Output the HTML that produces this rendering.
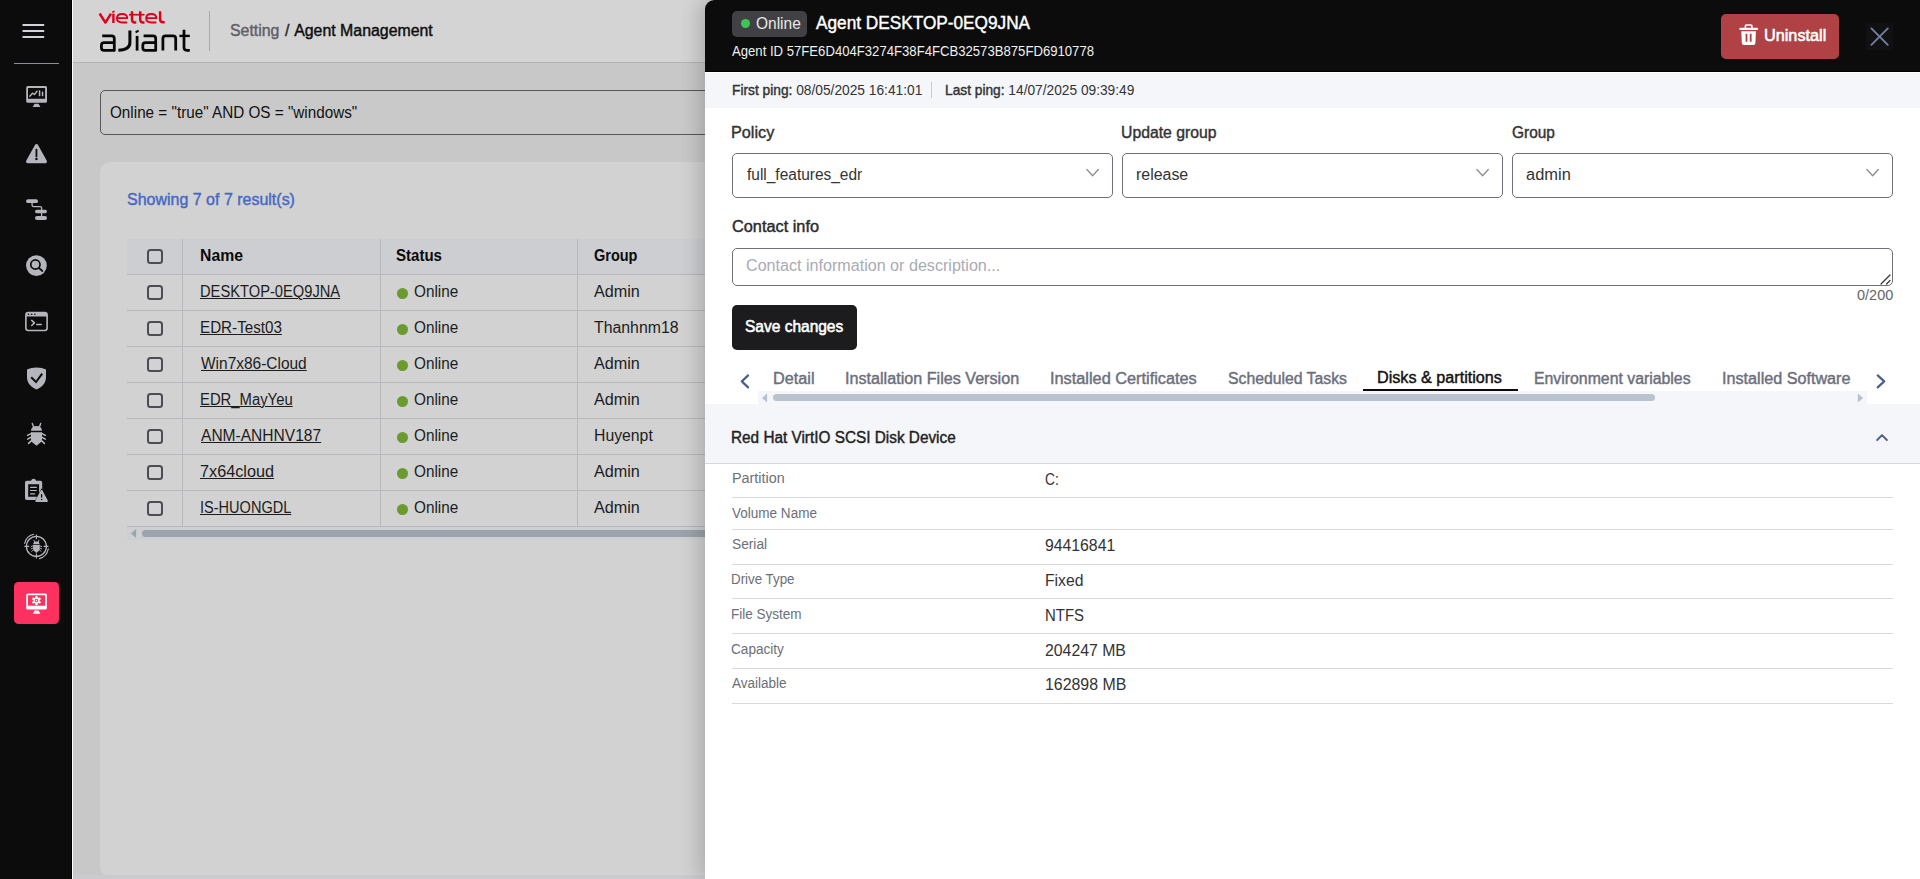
<!DOCTYPE html>
<html><head><meta charset="utf-8"><title>Agent Management</title>
<style>
*{box-sizing:border-box;margin:0;padding:0}
html,body{width:1920px;height:879px;overflow:hidden;background:#c8c8c8;font-family:"Liberation Sans",sans-serif}
.abs{position:absolute}
.t{position:absolute;white-space:nowrap;line-height:1;transform-origin:0 50%}
.m{-webkit-text-stroke:0.42px currentColor}
.m2{-webkit-text-stroke:0.55px currentColor}
.b{font-weight:bold}
.u{text-decoration:underline;text-decoration-thickness:1px;text-underline-offset:1px}
#side{left:0;top:0;width:71px;height:879px;background:#0c0c0c}
#sideb{left:71px;top:0;width:1px;height:879px;background:#000}
#sidew{left:72px;top:0;width:1px;height:879px;background:#fdfdfd}
#hdr{left:73px;top:0;width:1847px;height:62px;background:#d4d4d4}
#hdrb{left:73px;top:62px;width:1847px;height:1px;background:#b4b4b7}
#search{left:100px;top:90px;width:700px;height:45px;border:1px solid #56575c;border-radius:5px;background:#c9c9c9}
#card{left:100px;top:162px;width:700px;height:713px;background:#d2d2d2;border-radius:10px 10px 8px 8px}
#foot{left:73px;top:875px;width:1847px;height:4px;background:#cbcbcf}
#thead{left:127px;top:239px;width:600px;height:35px;background:#cdced1}
.hl{position:absolute;left:127px;width:600px;height:1px;background:#b6b8bd}
.vl{position:absolute;top:239px;width:1px;height:287px;background:#b6b8bd}
.cb{position:absolute;left:147px;width:16px;height:15px;border:2px solid #4c4d54;border-radius:3.5px}
.dot{position:absolute;left:397px;width:11px;height:11px;border-radius:50%;background:#6b9a2f}
#tscroll{left:127px;top:527px;width:600px;height:13px;background:#cdcfd2}
#tthumb{left:142px;top:530px;width:600px;height:7px;border-radius:4px;background:#9ba3ac}
#panel{left:705px;top:0;width:1215px;height:879px;background:#fff;border-top-left-radius:9px;box-shadow:-6px 0 20px rgba(0,0,0,.18);overflow:hidden}
#phead{left:0;top:0;width:1215px;height:72px;background:#0c0c0c;border-bottom:1px solid #000}
#pinfo{left:0;top:72px;width:1215px;height:36px;background:#f5f6fa;border-top:1px solid #fff}
.sel{position:absolute;top:153px;width:381px;height:45px;border:1px solid #6d7079;border-radius:5px;background:#fff}
#ta{left:27px;top:248px;width:1161px;height:38px;border:1px solid #6d7079;border-radius:5px;background:#fff}
#save{left:27px;top:305px;width:125px;height:45px;border-radius:5px;background:#1c1c1e}
#unin{left:1016px;top:14px;width:118px;height:45px;border-radius:5px;background:#b04144}
#xbox{left:1161px;top:23px;width:27px;height:27px;background:#111113}
#sec{left:0;top:404px;width:1215px;height:59px;background:#f5f6fa}
#secb{left:0;top:463px;width:1215px;height:1px;background:#d1d7df}
.rl{position:absolute;left:27px;width:1161px;height:1px;background:#d9dadd}
#track{left:53px;top:391px;width:1109px;height:13px;background:#f5f6fa}
#thumb{left:68px;top:394px;width:882px;height:7px;border-radius:4px;background:#b8c3ce}
#tabul{left:658px;top:389px;width:155px;height:2px;background:#0c0c0c}
#badge{left:27px;top:11px;width:75px;height:26px;border-radius:5px;background:#414145}
#bdot{left:35.9px;top:18.7px;width:9.2px;height:9.2px;border-radius:50%;background:#3cc655}
#pdiv{left:226px;top:82px;width:1px;height:16px;background:#c9cbd1}
</style></head><body>
<div class="abs" id="hdr"></div><div class="abs" id="hdrb"></div>
<div class="abs" id="search"></div>
<div class="abs" id="card"></div>
<div class="abs" id="thead"></div>
<div class="hl" style="top:274px"></div>
<div class="hl" style="top:310px"></div>
<div class="hl" style="top:346px"></div>
<div class="hl" style="top:382px"></div>
<div class="hl" style="top:418px"></div>
<div class="hl" style="top:454px"></div>
<div class="hl" style="top:490px"></div>
<div class="hl" style="top:526px"></div>
<div class="vl" style="left:182px"></div>
<div class="vl" style="left:380px"></div>
<div class="vl" style="left:577px"></div>
<div class="cb" style="top:249px"></div>
<div class="cb" style="top:285px"></div>
<div class="dot" style="top:287.7px"></div>
<div class="cb" style="top:321px"></div>
<div class="dot" style="top:323.7px"></div>
<div class="cb" style="top:357px"></div>
<div class="dot" style="top:359.7px"></div>
<div class="cb" style="top:393px"></div>
<div class="dot" style="top:395.7px"></div>
<div class="cb" style="top:429px"></div>
<div class="dot" style="top:431.7px"></div>
<div class="cb" style="top:465px"></div>
<div class="dot" style="top:467.7px"></div>
<div class="cb" style="top:501px"></div>
<div class="dot" style="top:503.7px"></div>
<div class="abs" id="tscroll"></div><div class="abs" id="tthumb"></div>
<svg class="abs" style="left:127px;top:527px" width="14" height="13"><path d="M9.1,2 L4,6.5 L9.1,11 Z" fill="#99a5b0"/></svg>
<div class="abs" id="foot"></div>
<div class="abs" id="side"></div><div class="abs" id="sideb"></div><div class="abs" id="sidew"></div>
<svg class="abs" style="left:0;top:0" width="71" height="879" viewBox="0 0 71 879">
<g fill="#d2d2da"><rect x="22.5" y="24" width="21.7" height="2" rx=".6"/><rect x="22.5" y="30" width="21.7" height="2" rx=".6"/><rect x="22.5" y="36" width="21.7" height="2" rx=".6"/></g>
<rect x="14" y="63" width="45" height="1" fill="#8e8e96"/>
<g fill="#b5b5bd" stroke="none">
<!-- 1 monitor chart -->
<path fill-rule="evenodd" d="M27.7,86 H45.5 Q47,86 47,87.5 V101.3 Q47,102.8 45.5,102.8 H27.7 Q26.2,102.8 26.2,101.3 V87.5 Q26.2,86 27.7,86 Z M28,88 V98.8 H45.1 V88 Z"/>
<path d="M34.5,103.7 H38.5 L40.4,107 H32.8 Z"/>
<rect x="38.8" y="90.3" width="1.5" height="6" rx=".5"/><rect x="41.8" y="91.6" width="1.5" height="4.7" rx=".5"/>
<path d="M29.8,96.3 L32.5,93.2 L34.4,94.5 L37,91.2" fill="none" stroke="#b5b5bd" stroke-width="1.4" stroke-linecap="round" stroke-linejoin="round"/>
<!-- 2 warning -->
<path d="M36.5,145.6 L45.4,161.6 H27.6 Z" stroke="#b5b5bd" stroke-width="3.2" stroke-linejoin="round"/>
<path d="M36.45,149.6 V156.4" stroke="#0c0c0c" stroke-width="1.8" stroke-linecap="round"/><circle cx="36.45" cy="159.1" r="1.25" fill="#0c0c0c"/>
<!-- 3 tree -->
<rect x="26.1" y="199.2" width="11.9" height="3.9" rx="1.9"/><rect x="35" y="209.7" width="12" height="3.6" rx="1.8"/><rect x="35" y="216" width="12" height="4" rx="2"/>
<path d="M32.1,202.5 V205.3 Q32.1,206.7 33.5,206.7 H40.2 Q41.6,206.7 41.6,208.1 V217" fill="none" stroke="#b5b5bd" stroke-width="1.3"/>
<!-- 4 search -->
<circle cx="36.4" cy="265.6" r="10.4"/>
<circle cx="35.4" cy="264.5" r="4.6" fill="none" stroke="#0c0c0c" stroke-width="1.7"/><path d="M38.9,268 L42.4,271" stroke="#0c0c0c" stroke-width="1.7" stroke-linecap="round"/>
<!-- 5 terminal -->
<rect x="25.9" y="312.6" width="21.2" height="17.9" rx="2.4" fill="none" stroke="#b5b5bd" stroke-width="1.6"/>
<path d="M25.9,316.6 V314.8 Q25.9,312.6 28.1,312.6 H44.9 Q47.1,312.6 47.1,314.8 V316.6 Z"/>
<circle cx="28.5" cy="314.3" r=".8" fill="#0c0c0c"/><circle cx="31.7" cy="314.3" r=".8" fill="#0c0c0c"/><circle cx="34.9" cy="314.3" r=".8" fill="#0c0c0c"/>
<path d="M31.7,320.4 L34.4,322.9 L31.7,325.5 M36.8,324.4 H41.2" fill="none" stroke="#b5b5bd" stroke-width="1.5" stroke-linecap="round" stroke-linejoin="round"/>
<!-- 6 shield -->
<path d="M36.5,367.4 C33,367.4 29.6,368.1 27,369.4 V377 C27,383.4 31.3,387.4 36.5,389.5 C41.7,387.4 46,383.4 46,377 V369.4 C43.4,368.1 40,367.4 36.5,367.4 Z"/>
<path d="M31.2,377.3 L36,382 L42.2,373.6" fill="none" stroke="#0c0c0c" stroke-width="2" stroke-linecap="butt" stroke-linejoin="miter"/>
<!-- 7 bug -->
<path d="M31,430.8 Q31.2,426 36.5,426 Q41.8,426 42,430.8 Z"/>
<path d="M33.6,427 L32.3,423.4 M39.4,427 L40.7,423.4" stroke="#b5b5bd" stroke-width="1.4" stroke-linecap="round"/>
<path d="M31,432.2 H42 V441.2 L36.5,445.7 L31,441.2 Z"/>
<path d="M31.5,433.3 L27.6,435.4 M31.5,437 L27.7,439.1 M31.5,440.6 L28.6,443.4 M41.5,433.3 L45.4,435.4 M41.5,437 L45.3,439.1 M41.5,440.6 L44.4,443.4" stroke="#b5b5bd" stroke-width="1.5" stroke-linecap="round"/>
<!-- 8 clipboard warn -->
<path fill-rule="evenodd" d="M26.8,480.8 H31 Q31.8,478.8 33.6,478.8 Q35.4,478.8 36.2,480.8 H40.4 Q42.2,480.8 42.2,482.6 V498.2 Q42.2,500 40.4,500 H26.8 Q25,500 25,498.2 V482.6 Q25,480.8 26.8,480.8 Z M28.2,484.2 V496.7 H39.1 V484.2 Z"/>
<rect x="30" y="486.7" width="7" height="1.2" rx=".6"/><rect x="30" y="489.9" width="7" height="1.2" rx=".6"/><rect x="30" y="493.3" width="5.2" height="1.2" rx=".6"/>
<path d="M41.6,488.2 L49.3,502.8 H33.9 Z" fill="#0c0c0c"/>
<path d="M41.6,491 L46.9,500.9 H36.3 Z" stroke="#b5b5bd" stroke-width="2" stroke-linejoin="round"/>
<path d="M41.6,494.2 V497.6" stroke="#0c0c0c" stroke-width="1.3"/><circle cx="41.6" cy="499.4" r=".75" fill="#0c0c0c"/>
<!-- 9 bug target -->
<circle cx="36.4" cy="546.4" r="10" fill="none" stroke="#b5b5bd" stroke-width="1.3"/>
<path d="M36.4,534.4 V539.2 M36.4,553.6 V558.4 M24.4,546.4 H29.2 M43.6,546.4 H48.4" stroke="#b5b5bd" stroke-width="1.1"/>
<path d="M24.6,543.5 A12.4,12.4 0 0 1 33.6,534.3" fill="none" stroke="#b5b5bd" stroke-width="1.1" stroke-linecap="round"/>
<path d="M48.3,548.9 A12.4,12.4 0 0 1 39.5,558.6" fill="none" stroke="#b5b5bd" stroke-width="1.1" stroke-linecap="round"/>
<path d="M34.4,541.5 H38.4 L39.7,543.9 H33.1 Z"/>
<path d="M34.5,541.8 L33.9,540.2 M38.3,541.8 L38.9,540.2" stroke="#b5b5bd" stroke-width=".9" stroke-linecap="round"/>
<path d="M33.1,544.8 H39.7 V550 L36.4,553 L33.1,550 Z"/>
<path d="M33.3,545.6 L31.1,546.6 M33.3,547.8 L31.2,548.8 M33.3,549.9 L31.8,551.4 M39.5,545.6 L41.7,546.6 M39.5,547.8 L41.6,548.8 M39.5,549.9 L41,551.4" stroke="#b5b5bd" stroke-width=".9" stroke-linecap="round"/>
</g>
<!-- 10 active -->
<rect x="14" y="582" width="45" height="42" rx="4.5" fill="#fd3160"/>
<g fill="#fff">
<path fill-rule="evenodd" d="M27.7,593.4 H45.4 Q46.9,593.4 46.9,594.9 V607.9 Q46.9,609.4 45.4,609.4 H27.7 Q26.2,609.4 26.2,607.9 V594.9 Q26.2,593.4 27.7,593.4 Z M28,595.3 V605.7 H45.1 V595.3 Z"/>
<path d="M34.5,610.5 H38.5 L40.4,613.7 H32.8 Z"/>
<path fill-rule="evenodd" d="M35.19,597.77 L35.38,595.97 L37.52,595.97 L37.71,597.77 L38.27,598.09 L39.92,597.36 L40.99,599.21 L39.53,600.28 L39.53,600.92 L40.99,601.99 L39.92,603.84 L38.27,603.11 L37.71,603.43 L37.52,605.23 L35.38,605.23 L35.19,603.43 L34.63,603.11 L32.98,603.84 L31.91,601.99 L33.37,600.92 L33.37,600.28 L31.91,599.21 L32.98,597.36 L34.63,598.09 Z M36.45,598.85 A1.75,1.75 0 1 0 36.45,602.35 A1.75,1.75 0 1 0 36.45,598.85 Z"/><circle cx="36.45" cy="600.6" r="0.75"/>
</g>
</svg>

<svg class="abs" style="left:96px;top:8px" width="74" height="18" viewBox="0 0 74 18"><g fill="none" stroke="#dc0018" stroke-width="2.4" stroke-linejoin="round" stroke-linecap="butt">
<path d="M3.6,5.5 L9.4,14.6 L15,5.6"/>
<path d="M17.4,5.6 V15"/><path d="M16.3,4.3 L18.6,3.3" stroke-width="1.7"/>
<path d="M21.2,10.1 H31.2 C31.3,7.2 29.3,6 26.1,6 C22.7,6 21,7.5 21,10.3 C21,13.2 22.7,14.5 26.1,14.5 H31.2" stroke-width="1.9"/>
<path d="M36,3.3 V11.6 C36,13.8 37,14.5 38.8,14.5 H40.3"/><path d="M33,6.7 H48.5" stroke-width="1.7"/>
<path d="M44.2,3.3 V11.6 C44.2,13.8 45.2,14.5 47,14.5 H48.5"/>
<path d="M50.4,10.1 H60.4 C60.5,7.2 58.5,6 55.3,6 C51.9,6 50.2,7.5 50.2,10.3 C50.2,13.2 51.9,14.5 55.3,14.5 H60.4" stroke-width="1.9"/>
<path d="M64.1,3.3 V11 C64.1,13.5 65.2,14.3 67.2,14.3 H68.7"/>
</g></svg>
<svg class="abs" style="left:96px;top:25.7px" width="100" height="28" viewBox="0 0 100 28"><g fill="none" stroke="#060606" stroke-width="2.75" stroke-linejoin="round" stroke-linecap="butt">
<path d="M6.2,9.9 H15.6 Q18.3,9.9 18.3,12.6 V24.4 H8.1 Q5.4,24.4 5.4,21.7 V19.4 Q5.4,16.7 8.1,16.7 H18.3"/>
<path d="M33.9,4.4 V16.5 Q33.9,24 22.4,24.3" stroke-width="3"/>
<path d="M41.1,9.9 V24.6"/><path d="M39.6,6.3 L42.6,4.6" stroke-width="2"/>
<path d="M47.6,9.9 H57 Q59.7,9.9 59.7,12.6 V24.4 H49.5 Q46.8,24.4 46.8,21.7 V19.4 Q46.8,16.7 49.5,16.7 H59.7"/>
<path d="M66.9,24.6 V12.6 Q66.9,9.9 69.6,9.9 H77 Q79.7,9.9 79.7,12.6 V24.6"/>
<path d="M88,3.7 V21.6 Q88,24.3 90.7,24.3 H93.8"/><path d="M83.4,9.9 H93.8" stroke-width="2.4"/>
</g></svg>
<div class="abs" style="left:209px;top:11px;width:1px;height:40px;background:#a9a9ac"></div>

<span id="t0" class="t m" style="left:230.44px;top:22.71px;font-size:16px;color:#0d0d0d;letter-spacing:0.000px;transform:scaleX(0.9925)"><span style="color:#5f6068">Setting</span> <span style="color:#2a2a2a;margin:0 1.2px">/</span> Agent Management</span>
<span id="t1" class="t " style="left:109.84px;top:104.96px;font-size:16px;color:#111;letter-spacing:0.000px;transform:scaleX(0.9535)">Online = &quot;true&quot; AND OS = &quot;windows&quot;</span>
<span id="t2" class="t m" style="left:127.04px;top:192.46px;font-size:16px;color:#4668c4;letter-spacing:0.000px;transform:scaleX(0.9992)">Showing 7 of 7 result(s)</span>
<span id="t3" class="t b" style="left:199.91px;top:247.54px;font-size:15.6px;color:#0a0a0a;letter-spacing:0.000px;transform:scaleX(1.0104)">Name</span>
<span id="t4" class="t b" style="left:396.45px;top:247.54px;font-size:15.6px;color:#0a0a0a;letter-spacing:0.000px;transform:scaleX(0.9643)">Status</span>
<span id="t5" class="t b" style="left:593.62px;top:247.54px;font-size:15.6px;color:#0a0a0a;letter-spacing:0.000px;transform:scaleX(0.9292)">Group</span>
<span id="t6" class="t u" style="left:199.78px;top:284.46px;font-size:16px;color:#1c1c1c;letter-spacing:0.000px;transform:scaleX(0.9182)">DESKTOP-0EQ9JNA</span>
<span id="t7" class="t " style="left:413.74px;top:284.46px;font-size:16px;color:#1c1c1c;letter-spacing:0.000px;transform:scaleX(0.9561)">Online</span>
<span id="t8" class="t " style="left:594.28px;top:284.46px;font-size:16px;color:#1c1c1c;letter-spacing:0.000px;transform:scaleX(1.0114)">Admin</span>
<span id="t9" class="t u" style="left:199.77px;top:320.46px;font-size:16px;color:#1c1c1c;letter-spacing:0.000px;transform:scaleX(0.9495)">EDR-Test03</span>
<span id="t10" class="t " style="left:413.74px;top:320.46px;font-size:16px;color:#1c1c1c;letter-spacing:0.000px;transform:scaleX(0.9561)">Online</span>
<span id="t11" class="t " style="left:594.28px;top:320.46px;font-size:16px;color:#1c1c1c;letter-spacing:0.000px;transform:scaleX(0.9897)">Thanhnm18</span>
<span id="t12" class="t u" style="left:200.78px;top:356.46px;font-size:16px;color:#1c1c1c;letter-spacing:0.000px;transform:scaleX(0.9664)">Win7x86-Cloud</span>
<span id="t13" class="t " style="left:413.74px;top:356.46px;font-size:16px;color:#1c1c1c;letter-spacing:0.000px;transform:scaleX(0.9561)">Online</span>
<span id="t14" class="t " style="left:594.28px;top:356.46px;font-size:16px;color:#1c1c1c;letter-spacing:0.000px;transform:scaleX(1.0114)">Admin</span>
<span id="t15" class="t u" style="left:199.78px;top:392.46px;font-size:16px;color:#1c1c1c;letter-spacing:0.000px;transform:scaleX(0.9272)">EDR_MayYeu</span>
<span id="t16" class="t " style="left:413.74px;top:392.46px;font-size:16px;color:#1c1c1c;letter-spacing:0.000px;transform:scaleX(0.9561)">Online</span>
<span id="t17" class="t " style="left:594.28px;top:392.46px;font-size:16px;color:#1c1c1c;letter-spacing:0.000px;transform:scaleX(1.0114)">Admin</span>
<span id="t18" class="t u" style="left:200.78px;top:428.46px;font-size:16px;color:#1c1c1c;letter-spacing:0.000px;transform:scaleX(0.9722)">ANM-ANHNV187</span>
<span id="t19" class="t " style="left:413.74px;top:428.46px;font-size:16px;color:#1c1c1c;letter-spacing:0.000px;transform:scaleX(0.9561)">Online</span>
<span id="t20" class="t " style="left:593.56px;top:428.46px;font-size:16px;color:#1c1c1c;letter-spacing:0.000px;transform:scaleX(0.9863)">Huyenpt</span>
<span id="t21" class="t u" style="left:199.72px;top:464.46px;font-size:16px;color:#1c1c1c;letter-spacing:0.000px;transform:scaleX(1.0151)">7x64cloud</span>
<span id="t22" class="t " style="left:413.74px;top:464.46px;font-size:16px;color:#1c1c1c;letter-spacing:0.000px;transform:scaleX(0.9561)">Online</span>
<span id="t23" class="t " style="left:594.28px;top:464.46px;font-size:16px;color:#1c1c1c;letter-spacing:0.000px;transform:scaleX(1.0114)">Admin</span>
<span id="t24" class="t u" style="left:199.71px;top:500.46px;font-size:16px;color:#1c1c1c;letter-spacing:0.000px;transform:scaleX(0.9086)">IS-HUONGDL</span>
<span id="t25" class="t " style="left:413.74px;top:500.46px;font-size:16px;color:#1c1c1c;letter-spacing:0.000px;transform:scaleX(0.9561)">Online</span>
<span id="t26" class="t " style="left:594.28px;top:500.46px;font-size:16px;color:#1c1c1c;letter-spacing:0.000px;transform:scaleX(1.0114)">Admin</span>
<div class="abs" id="panel">
<div class="abs" id="phead"></div><div class="abs" id="pinfo"></div><div class="abs" id="pdiv"></div>
<div class="abs" id="badge"></div><div class="abs" id="bdot"></div>
<div class="abs" id="unin"></div><div class="abs" id="xbox"></div>
<div class="sel" style="left:27px"></div><div class="sel" style="left:417px"></div><div class="sel" style="left:807px"></div>
<div class="abs" id="ta"></div><div class="abs" id="save"></div>
<div class="abs" id="sec"></div><div class="abs" id="secb"></div>
<div class="abs" id="track"></div><div class="abs" id="thumb"></div><div class="abs" id="tabul"></div>
<div class="rl" style="top:497px"></div>
<div class="rl" style="top:529px"></div>
<div class="rl" style="top:564px"></div>
<div class="rl" style="top:598px"></div>
<div class="rl" style="top:633px"></div>
<div class="rl" style="top:668px"></div>
<div class="rl" style="top:703px"></div>
<svg class="abs" style="left:379px;top:166px" width="16" height="14"><path d="M2.9,3.5 L8.6,9.7 L14.3,3.5" fill="none" stroke="#8a8d95" stroke-width="1.3" stroke-linecap="round" stroke-linejoin="round"/></svg>
<svg class="abs" style="left:769px;top:166px" width="16" height="14"><path d="M2.9,3.5 L8.6,9.7 L14.3,3.5" fill="none" stroke="#8a8d95" stroke-width="1.3" stroke-linecap="round" stroke-linejoin="round"/></svg>
<svg class="abs" style="left:1159px;top:166px" width="16" height="14"><path d="M2.9,3.5 L8.6,9.7 L14.3,3.5" fill="none" stroke="#8a8d95" stroke-width="1.3" stroke-linecap="round" stroke-linejoin="round"/></svg>
<svg class="abs" style="left:1032px;top:22px" width="24" height="26" viewBox="1737 22 24 26"><g fill="#fff"><rect x="1739.3" y="27.8" width="18.8" height="2.2" rx="1"/><path d="M1744.6,28.5 V26 Q1744.6,24.3 1746.3,24.3 H1751 Q1752.7,24.3 1752.7,26 V28.5 H1751.1 V26.4 Q1751.1,25.8 1750.5,25.8 H1746.8 Q1746.2,25.8 1746.2,26.4 V28.5 Z"/><path d="M1741.3,31.2 H1755.9 L1755.4,43 Q1755.3,44.9 1753.4,44.9 H1743.8 Q1741.9,44.9 1741.8,43 Z M1745.6,33.8 V41.8 H1747.4 V33.8 Z M1749.8,33.8 V41.8 H1751.6 V33.8 Z" fill-rule="evenodd"/></g></svg>
<svg class="abs" style="left:1161px;top:23px" width="27" height="27" viewBox="1866 23 27 27"><path d="M1871.4,28.4 L1887.8,44.8 M1887.8,28.4 L1871.4,44.8" stroke="#7080a0" stroke-width="1.9" stroke-linecap="round" fill="none"/></svg>
<svg class="abs" style="left:30px;top:370px" width="24" height="24" viewBox="735 370 24 24"><path d="M748.1,375.4 L741.8,381.4 L748.1,387.4" stroke="#4b6183" stroke-width="2.2" fill="none" stroke-linecap="round" stroke-linejoin="round"/></svg>
<svg class="abs" style="left:1165px;top:370px" width="24" height="24" viewBox="1870 370 24 24"><path d="M1877.7,375.4 L1884.2,381.4 L1877.7,387.4" stroke="#4b6183" stroke-width="2.2" fill="none" stroke-linecap="round" stroke-linejoin="round"/></svg>
<svg class="abs" style="left:53px;top:390.5px" width="14" height="14"><path d="M9.1,2.4 L4,6.9 L9.1,11.4 Z" fill="#b5c2ce"/></svg>
<svg class="abs" style="left:1148px;top:390.5px" width="14" height="14"><path d="M4.9,2.4 L10,6.9 L4.9,11.4 Z" fill="#b5c2ce"/></svg>
<svg class="abs" style="left:1173px;top:272px" width="14" height="14"><path d="M3,12 L12,3 M8.5,12 L12,8.5" stroke="#333" stroke-width="1.2" fill="none" stroke-linecap="round"/></svg>
<svg class="abs" style="left:1167px;top:428px" width="20" height="18" viewBox="1872 428 20 18"><path d="M1877.2,440 L1882,435.1 L1886.9,440" stroke="#4d5f82" stroke-width="1.9" fill="none" stroke-linecap="round" stroke-linejoin="round"/></svg>
<span id="t27" class="t " style="left:50.53px;top:15.66px;font-size:16px;color:#e8e8e8;letter-spacing:0.000px;transform:scaleX(0.9682)">Online</span>
<span id="t28" class="t m" style="left:111.10px;top:13.96px;font-size:18px;color:#fff;letter-spacing:0.000px;transform:scaleX(0.9567)">Agent DESKTOP-0EQ9JNA</span>
<span id="t29" class="t " style="left:27.28px;top:44.40px;font-size:14px;color:#efefef;letter-spacing:0.000px;transform:scaleX(0.9377)">Agent ID 57FE6D404F3274F38F4FCB32573B875FD6910778</span>
<span id="t30" class="t " style="left:26.63px;top:83.15px;font-size:14px;color:#333;letter-spacing:0.000px;transform:scaleX(0.9820)"><span class="m">First ping:</span> 08/05/2025 16:41:01</span>
<span id="t31" class="t " style="left:239.63px;top:83.15px;font-size:14px;color:#333;letter-spacing:0.000px;transform:scaleX(0.9807)"><span class="m">Last ping:</span> 14/07/2025 09:39:49</span>
<span id="t32" class="t m" style="left:26.39px;top:124.71px;font-size:16px;color:#333;letter-spacing:0.000px;transform:scaleX(1.0135)">Policy</span>
<span id="t33" class="t m" style="left:416.49px;top:124.71px;font-size:16px;color:#333;letter-spacing:0.000px;transform:scaleX(0.9848)">Update group</span>
<span id="t34" class="t m" style="left:806.73px;top:124.71px;font-size:16px;color:#333;letter-spacing:0.000px;transform:scaleX(0.9636)">Group</span>
<span id="t35" class="t " style="left:42.28px;top:166.96px;font-size:16px;color:#333;letter-spacing:0.000px;transform:scaleX(0.9667)">full_features_edr</span>
<span id="t36" class="t " style="left:430.91px;top:166.96px;font-size:16px;color:#333;letter-spacing:0.000px;transform:scaleX(0.9952)">release</span>
<span id="t37" class="t " style="left:821.27px;top:166.96px;font-size:16px;color:#333;letter-spacing:0.000px;transform:scaleX(1.0274)">admin</span>
<span id="t38" class="t m" style="left:26.66px;top:218.56px;font-size:16px;color:#2a2a2a;letter-spacing:0.000px;transform:scaleX(1.0188)">Contact info</span>
<span id="t39" class="t " style="left:40.71px;top:257.71px;font-size:16px;color:#a9abb3;letter-spacing:0.000px;transform:scaleX(1.0066)">Contact information or description...</span>
<span id="t40" class="t " style="left:1151.58px;top:288.15px;font-size:14px;color:#666;letter-spacing:0.000px;transform:scaleX(1.0348)">0/200</span>
<span id="t41" class="t m2" style="left:40.22px;top:319.21px;font-size:16px;color:#fff;letter-spacing:0.000px;transform:scaleX(0.9688)">Save changes</span>
<span id="t42" class="t m2" style="left:1058.77px;top:28.46px;font-size:16px;color:#fff;letter-spacing:0.000px;transform:scaleX(1.0147)">Uninstall</span>
<span id="t43" class="t m" style="left:68.29px;top:370.71px;font-size:16px;color:#6c6e7b;letter-spacing:0.000px;transform:scaleX(1.0148)">Detail</span>
<span id="t44" class="t m" style="left:140.17px;top:370.71px;font-size:16px;color:#6c6e7b;letter-spacing:0.000px;transform:scaleX(1.0092)">Installation Files Version</span>
<span id="t45" class="t m" style="left:345.17px;top:370.71px;font-size:16px;color:#6c6e7b;letter-spacing:0.000px;transform:scaleX(1.0185)">Installed Certificates</span>
<span id="t46" class="t m" style="left:522.94px;top:370.71px;font-size:16px;color:#6c6e7b;letter-spacing:0.000px;transform:scaleX(0.9856)">Scheduled Tasks</span>
<span id="t47" class="t m" style="left:672.37px;top:370.36px;font-size:16px;color:#111;letter-spacing:0.000px;transform:scaleX(1.0110)">Disks &amp; partitions</span>
<span id="t48" class="t m" style="left:828.92px;top:370.71px;font-size:16px;color:#6c6e7b;letter-spacing:0.000px;transform:scaleX(0.9889)">Environment variables</span>
<span id="t49" class="t m" style="left:1016.57px;top:370.71px;font-size:16px;color:#6c6e7b;letter-spacing:0.000px;transform:scaleX(1.0101)">Installed Software</span>
<span id="t50" class="t m" style="left:26.49px;top:430.46px;font-size:16px;color:#222;letter-spacing:0.000px;transform:scaleX(0.9584)">Red Hat VirtIO SCSI Disk Device</span>
<span id="t51" class="t " style="left:26.60px;top:471.40px;font-size:14px;color:#6b6f78;letter-spacing:0.000px;transform:scaleX(1.0254)">Partition</span>
<span id="t52" class="t " style="left:27.28px;top:506.15px;font-size:14px;color:#6b6f78;letter-spacing:0.000px;transform:scaleX(0.9661)">Volume Name</span>
<span id="t53" class="t " style="left:26.57px;top:537.40px;font-size:14px;color:#6b6f78;letter-spacing:0.000px;transform:scaleX(0.9810)">Serial</span>
<span id="t54" class="t " style="left:26.37px;top:572.40px;font-size:14px;color:#6b6f78;letter-spacing:0.000px;transform:scaleX(0.9527)">Drive Type</span>
<span id="t55" class="t " style="left:26.36px;top:607.40px;font-size:14px;color:#6b6f78;letter-spacing:0.000px;transform:scaleX(0.9656)">File System</span>
<span id="t56" class="t " style="left:26.39px;top:642.40px;font-size:14px;color:#6b6f78;letter-spacing:0.000px;transform:scaleX(0.9714)">Capacity</span>
<span id="t57" class="t " style="left:27.28px;top:676.40px;font-size:14px;color:#6b6f78;letter-spacing:0.000px;transform:scaleX(0.9656)">Available</span>
<span id="t58" class="t " style="left:339.91px;top:471.56px;font-size:16px;color:#333;letter-spacing:0.000px;transform:scaleX(0.8600)">C:</span>
<span id="t59" class="t " style="left:339.81px;top:538.21px;font-size:16px;color:#333;letter-spacing:0.000px;transform:scaleX(0.9859)">94416841</span>
<span id="t60" class="t " style="left:339.76px;top:573.21px;font-size:16px;color:#333;letter-spacing:0.000px;transform:scaleX(0.9809)">Fixed</span>
<span id="t61" class="t " style="left:339.79px;top:608.21px;font-size:16px;color:#333;letter-spacing:0.000px;transform:scaleX(0.9336)">NTFS</span>
<span id="t62" class="t " style="left:339.78px;top:643.21px;font-size:16px;color:#333;letter-spacing:0.000px;transform:scaleX(0.9881)">204247 MB</span>
<span id="t63" class="t " style="left:339.78px;top:677.46px;font-size:16px;color:#333;letter-spacing:0.000px;transform:scaleX(0.9927)">162898 MB</span>
</div>
</body></html>
